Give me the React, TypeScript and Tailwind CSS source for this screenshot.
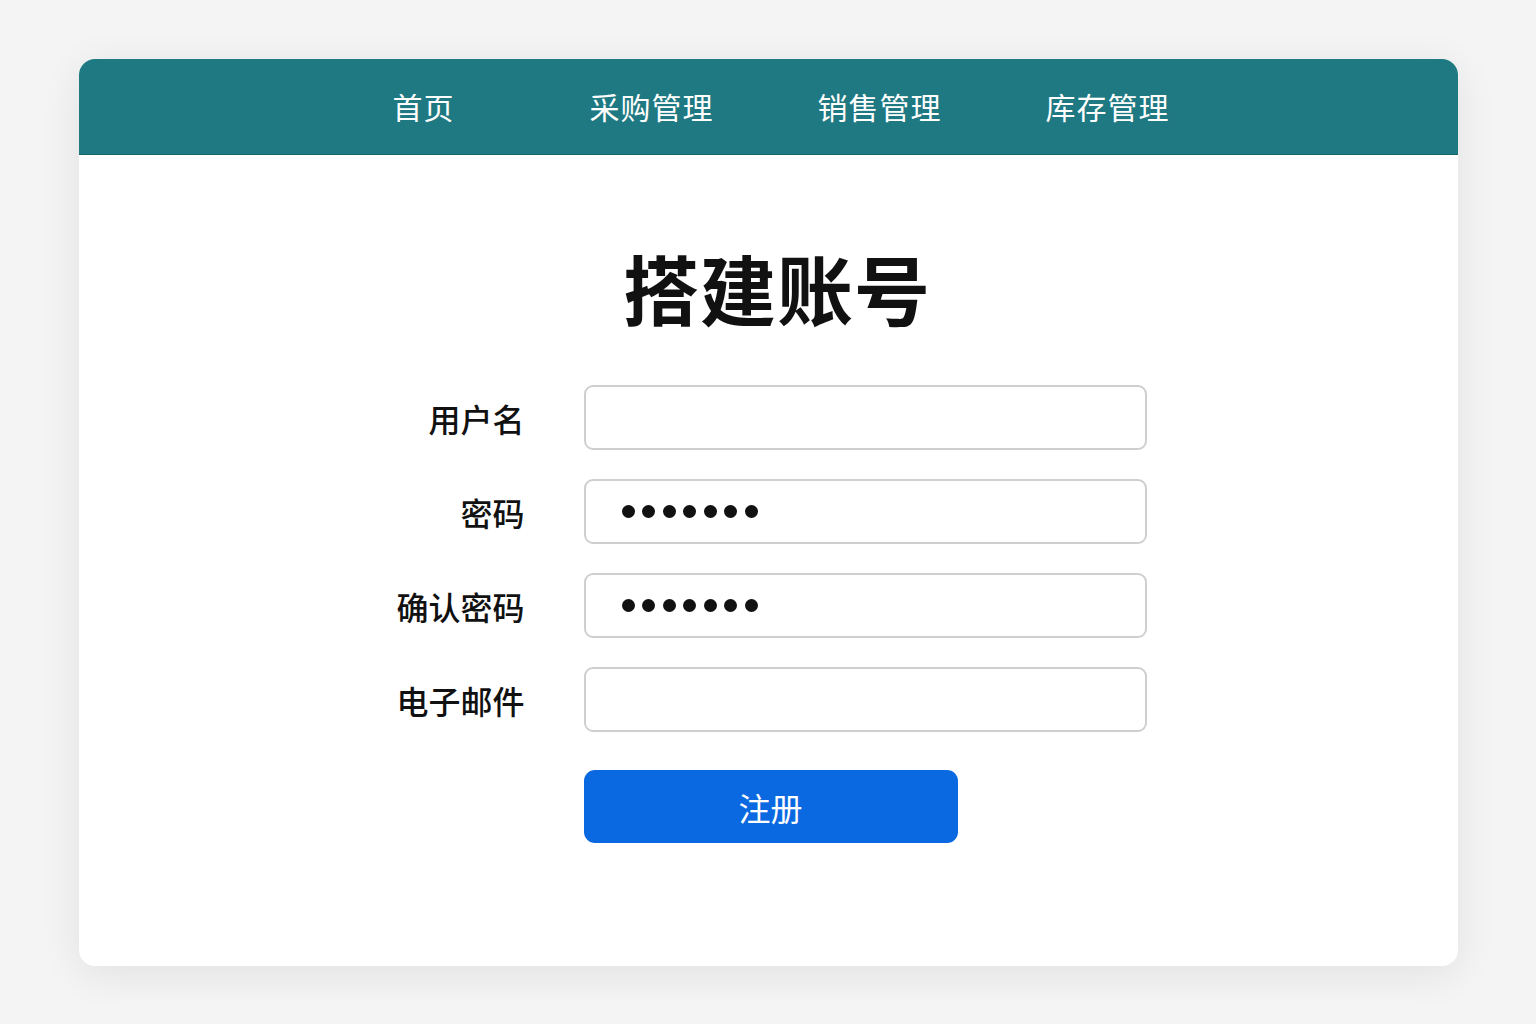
import React from 'react';

const navItems = ['首页', '采购管理', '销售管理', '库存管理'];

const fields = [
  { label: '用户名', dots: 0 },
  { label: '密码', dots: 7 },
  { label: '确认密码', dots: 7 },
  { label: '电子邮件', dots: 0 },
];

const font = { fontFamily: '"Noto Sans CJK SC", "Noto Sans", sans-serif' };

export default function App() {
  return (
    <div className="min-h-screen w-full bg-[#f4f4f4] pt-[59px]" style={font}>
      <div className="mx-auto w-[1379px] h-[907px] bg-white rounded-[16px] shadow-[0_8px_40px_rgba(0,0,0,0.08)] overflow-hidden">
        <nav className="h-[96px] bg-[#1f7982] border-b border-[#17646b] flex items-center justify-center pr-[5px]">
          {navItems.map((item) => (
            <div key={item} className="w-[228px] text-center text-white text-[30px] font-normal tracking-[1px]">
              {item}
            </div>
          ))}
        </nav>

        <div className="flex flex-col items-center">
          <h1 className="mt-[94px] ml-[18px] text-[76px] leading-none font-semibold text-[#111] tracking-[1px]">
            搭建账号
          </h1>

          <div className="mt-[60px] flex flex-col gap-[29px]">
            {fields.map((f) => (
              <div key={f.label} className="flex items-center gap-[59px]">
                <label className="w-[135px] text-right text-[32px] font-medium text-[#111] leading-none">
                  {f.label}
                </label>
                <div className="w-[563px] h-[65px] shrink-0 rounded-[9px] border-2 border-[#cfcfcf] bg-white flex items-center pl-[36px] gap-[7.5px]">
                  {Array.from({ length: f.dots }).map((_, i) => (
                    <span key={i} className="w-[13px] h-[13px] rounded-full bg-[#111]" />
                  ))}
                </div>
              </div>
            ))}

            <div className="flex items-center gap-[59px] mt-[9px]">
              <div className="w-[135px]" />
              <button className="w-[374px] h-[73px] rounded-[11px] bg-[#0a69e1] text-white text-[32px] font-normal leading-none">
                注册
              </button>
            </div>
          </div>
        </div>
      </div>
    </div>
  );
}
